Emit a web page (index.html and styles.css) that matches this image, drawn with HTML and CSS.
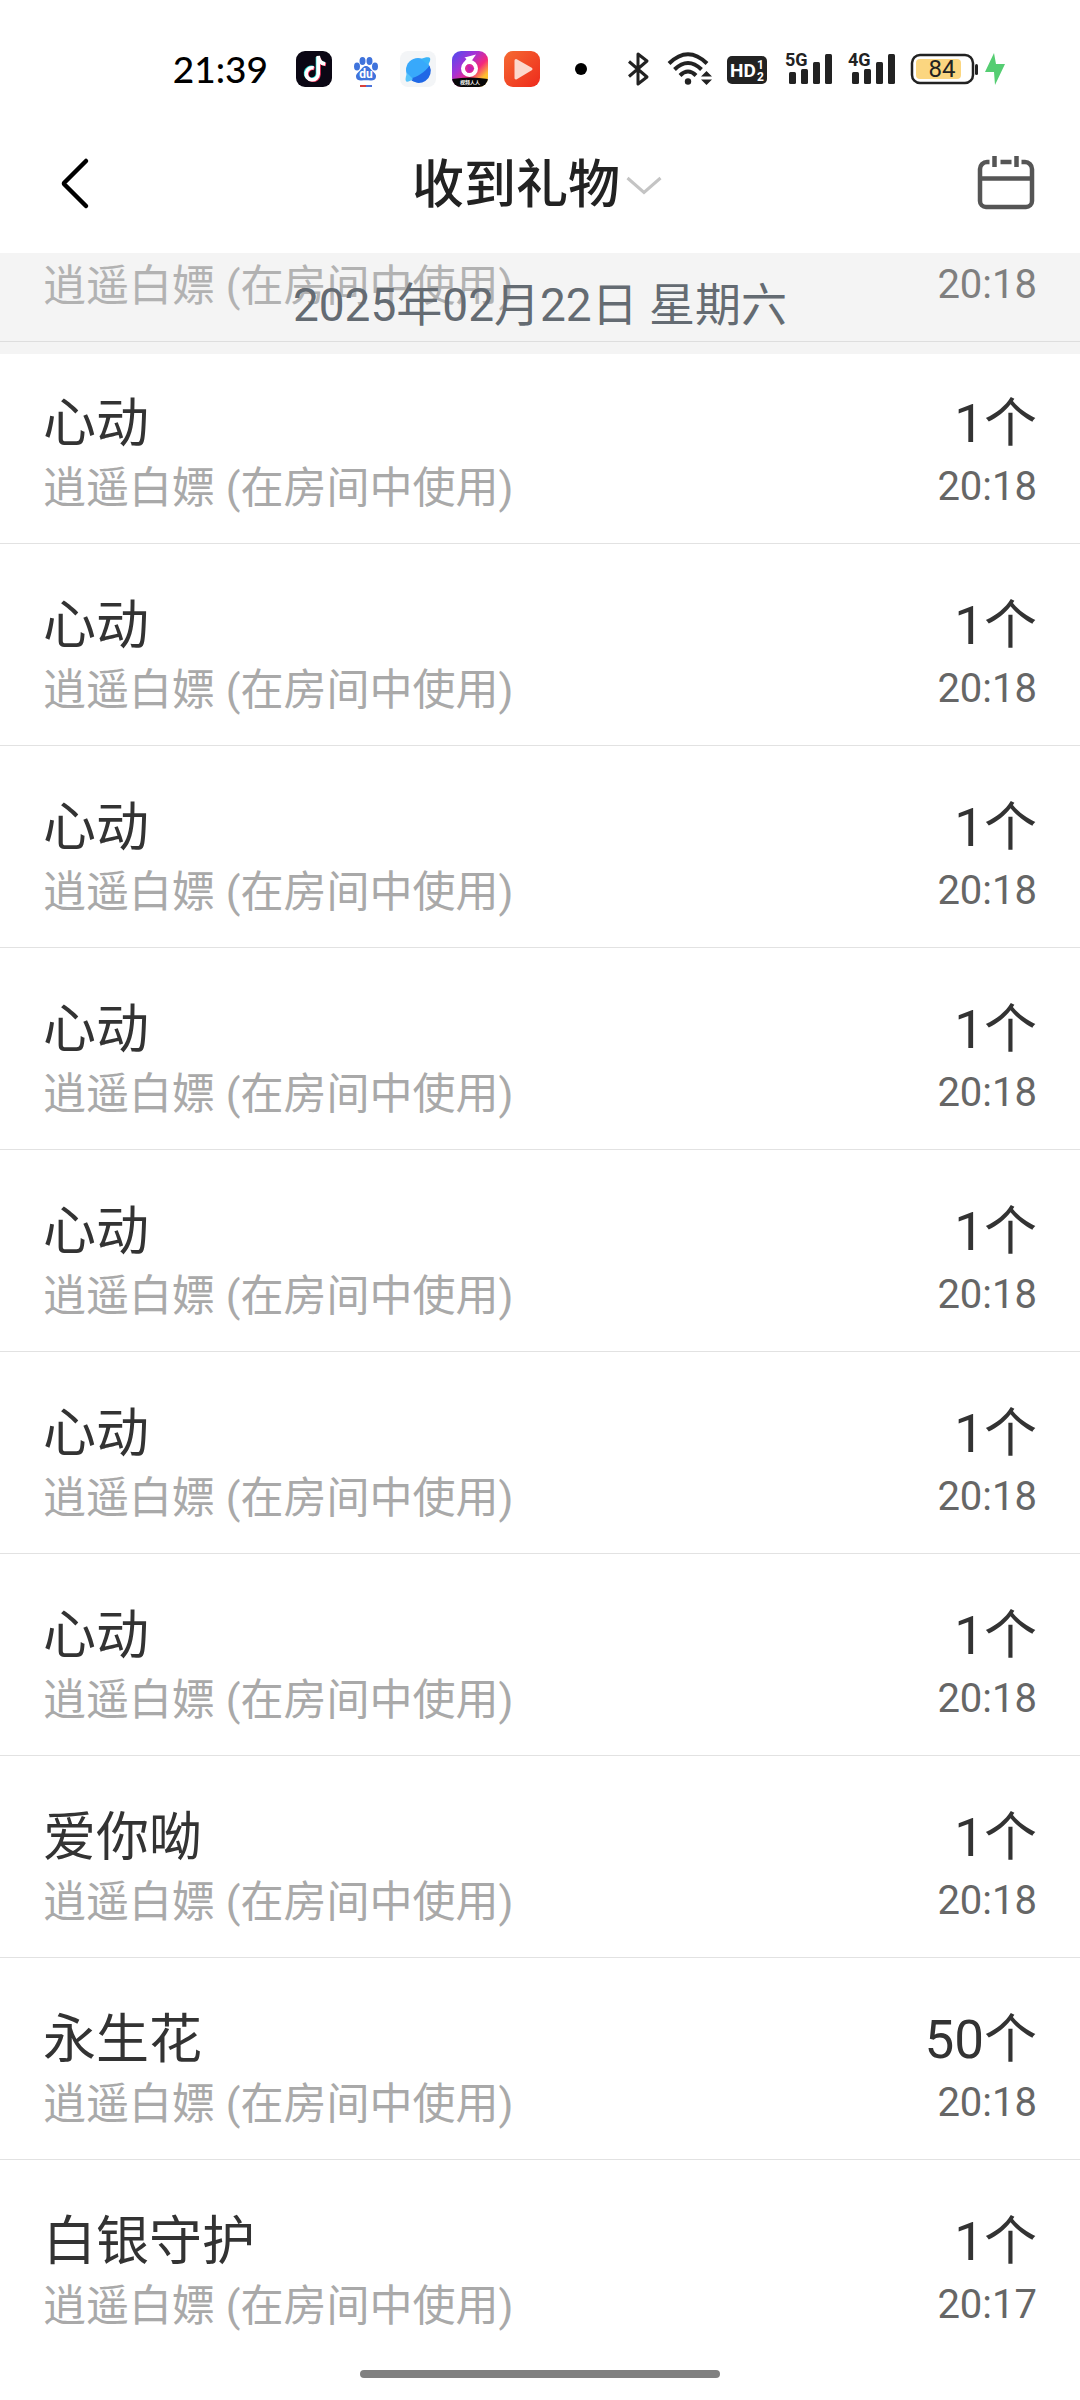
FILE: index.html
```html
<!DOCTYPE html>
<html lang="zh-CN">
<head>
    <meta charset="UTF-8">
    <meta name="viewport" content="width=device-width, initial-scale=1.0">
    <title>收到礼物</title>
    <link rel="stylesheet" href="styles.css">
</head>
<body>
    <div class="status-bar">
        <span class="clock">21:39</span>

        <div class="status-apps">
            <svg width="36" height="36" viewBox="0 0 36 36">
                <rect width="36" height="36" rx="9" fill="#0b0714"/>
                <g fill="none" stroke-width="3.6">
                    <path d="M17 16.500a6 6 0 1 0 4.500 6V6c.5 4 3 6 7 6.500" stroke="#25e5e0"/>
                    <path d="M18.500 17.500a6 6 0 1 0 4.500 6V7c.5 4 3 6 7 6.500" stroke="#f6315b"/>
                    <path d="M17.700 17a6 6 0 1 0 4.500 6V5c.5 5 3 7.500 7 8" stroke="#fff"/>
                </g>
            </svg>
            <svg width="36" height="36" viewBox="0 0 36 36">
                <g fill="#3f73dc">
                    <ellipse cx="9" cy="15.500" rx="3" ry="4"/>
                    <ellipse cx="14.500" cy="10" rx="3" ry="4"/>
                    <ellipse cx="21.500" cy="10" rx="3" ry="4"/>
                    <ellipse cx="27" cy="15.500" rx="3" ry="4"/>
                    <path d="M18 15c3 0 4 2.500 6 4.500 2.500 2.300 4.500 4 4 6.500-.5 3-3 3.600-5.500 3.400-3-.3-6-.3-9 0C11 29.600 8.500 29 8 26c-.4-2.500 1.500-4.200 4-6.500 2-2 3-4.500 6-4.500z"/>
                </g>
                <text class="du-text" x="18" y="27" text-anchor="middle">du</text>
                <path d="M12 35h6" stroke="#d8403c" stroke-width="2"/>
                <path d="M18 35h6" stroke="#4d73d8" stroke-width="2"/>
            </svg>
            <svg width="36" height="36" viewBox="0 0 36 36">
                <rect width="36" height="36" rx="8" fill="#f3f5f7"/>
                <circle cx="18" cy="19" r="12" fill="#38a9fb"/>
                <path d="M29.500 14.500A12 12 0 0 1 9.500 27.500C17 26.500 25 21 29.500 14.500z" fill="#2068e6"/>
                <path d="M21 8c4-2 8-2.500 9-1 .8 1.400-.2 4-2 7z" fill="#39b4f8"/>
                <path d="M7 22c-1.500 4-2 7.500-.6 8.500 1.200.8 3.600-.4 6.600-2.500z" fill="#57c4fb"/>
            </svg>
            <svg width="36" height="36" viewBox="0 0 36 36">
                <defs>
                    <linearGradient id="six" x1="0" y1="0" x2="1" y2="1">
                        <stop offset="0" stop-color="#4a4cf0"/>
                        <stop offset=".35" stop-color="#a432d6"/>
                        <stop offset=".6" stop-color="#f5287c"/>
                        <stop offset=".8" stop-color="#ffc02e"/>
                    </linearGradient>
                    <clipPath id="six-clip"><rect width="36" height="36" rx="9"/></clipPath>
                </defs>
                <g clip-path="url(#six-clip)">
                    <rect width="36" height="36" fill="url(#six)"/>
                    <path d="M12.500 6.500L24 3.500l-5.500 8-8 5c0-3.500 1.500-6 4-8.500z" fill="#fff"/>
                    <circle cx="17.500" cy="17.500" r="6.500" fill="#e02a96" stroke="#fff" stroke-width="4"/>
                    <path d="M15.500 13.500l7 4-7 4.500z" fill="#c321b0"/>
                    <path d="M0 28q18-3 36 0v8H0z" fill="#080808"/>
                </g>
                <text class="tiny-text" x="18" y="33" text-anchor="middle">视频人人</text>
            </svg>
            <svg width="36" height="36" viewBox="0 0 36 36">
                <defs>
                    <linearGradient id="play" x1="0" y1="0" x2="1" y2="1">
                        <stop offset="0" stop-color="#f56a32"/>
                        <stop offset="1" stop-color="#ee2a1c"/>
                    </linearGradient>
                </defs>
                <rect width="36" height="36" rx="9" fill="url(#play)"/>
                <path d="M12 9.500l15 8.500-15 9z" fill="#fcd8cd" stroke="#fcd8cd" stroke-width="3" stroke-linejoin="round"/>
            </svg>
        </div>

        <span class="more-dot"></span>

        <div class="status-system">
            <svg width="24" height="36" viewBox="0 0 24 36" fill="none" stroke="#222" stroke-width="3" stroke-linejoin="round">
                <path d="M2 10.500L20 26l-9 7V3l9 7L2 25.500"/>
            </svg>
            <svg width="48" height="36" viewBox="0 0 48 36">
                <g fill="none" stroke="#222" stroke-width="4">
                    <path d="M4 12.500Q23-6 42 12.500"/>
                    <path d="M9.500 18.500Q23 5.500 36.500 18.500"/>
                    <path d="M15 24.500Q23 16.500 31 24.500"/>
                </g>
                <circle cx="23" cy="30.500" r="3.200" fill="#222"/>
                <path d="M36 25.500l5.500-5.500 5.500 5.500zM36 28.500l5.500 5.500 5.500-5.500z" fill="#222"/>
            </svg>
            <svg width="40" height="36" viewBox="0 0 40 36">
                <rect y="5" width="40" height="28" rx="5" fill="#222"/>
                <text class="hd-text" x="3" y="26">HD</text>
                <text class="hd-sim" x="30" y="18">1</text>
                <text class="hd-sim" x="30" y="30">2</text>
            </svg>
            <svg width="54" height="36" viewBox="-5 0 54 36">
                <text class="net-text" x="-1" y="15">5G</text>
                <g fill="#222">
                    <rect x="3" y="21" width="7" height="12" rx="1.500"/>
                    <rect x="15" y="18" width="7" height="15" rx="1.500"/>
                    <rect x="27" y="11" width="7" height="22" rx="1.500"/>
                    <rect x="39" y="3" width="7" height="30" rx="1.500"/>
                </g>
            </svg>
            <svg width="48" height="36" viewBox="0 0 48 36">
                <text class="net-text" x="-1" y="15">4G</text>
                <g fill="#222">
                    <rect x="3" y="21" width="7" height="12" rx="1.500"/>
                    <rect x="15" y="18" width="7" height="15" rx="1.500"/>
                    <rect x="27" y="11" width="7" height="22" rx="1.500"/>
                    <rect x="39" y="3" width="7" height="30" rx="1.500"/>
                </g>
            </svg>
            <div class="battery">
                <svg width="68" height="36" viewBox="0 0 68 36">
                    <rect x="1" y="4" width="61" height="28" rx="8" fill="#fff" stroke="#222" stroke-width="2.500"/>
                    <rect x="5" y="8" width="45" height="20" rx="4" fill="#fbd680"/>
                    <rect x="64" y="13" width="3" height="11" rx="1.500" fill="#222"/>
                    <text class="battery-text" x="31" y="26" text-anchor="middle">84</text>
                </svg>
                <svg width="20" height="36" viewBox="0 0 20 36">
                    <path d="M9 2L0 21h9l1 13 10-21h-9z" fill="#55cd72"/>
                </svg>
            </div>
        </div>
    </div>

    <header class="header">
        <button class="icon-btn back-btn" aria-label="返回">
            <svg width="60" height="56" viewBox="0 0 60 56" fill="none" stroke="#000" stroke-width="4.500" stroke-linecap="round" stroke-linejoin="round">
                <path d="M42 6L20.500 27.500a1.500 1.500 0 0 0 0 2L42 51"/>
            </svg>
        </button>
        <button class="title-btn">
            <span class="title">收到礼物</span>
            <svg width="36" height="20" viewBox="0 0 36 20" fill="none" stroke="#c4c4c4" stroke-width="3">
                <path d="M1.500 2L18 16.500 34.500 2"/>
            </svg>
        </button>
        <button class="icon-btn calendar-btn" aria-label="选择日期">
            <svg width="60" height="56" viewBox="0 0 60 56" fill="none" stroke="#555" stroke-width="4.500">
                <path d="M13.500 7H11a7 7 0 0 0-7 7v32a6 6 0 0 0 6 6h40a6 6 0 0 0 6-6V14a7 7 0 0 0-7-7h-3.500M24.500 7h11M18.500 1v11M40.500 1v11M4 23.500h52"/>
            </svg>
        </button>
    </header>

    <main class="list-view">
        <div class="date-bar">2025年02月22日 星期六</div>
        <ul class="gift-list">
            <li class="gift">
                <div class="gift-info">
                    <p class="gift-name">心动</p>
                    <p class="gift-from">逍遥白嫖 (在房间中使用)</p>
                </div>
                <div class="gift-meta">
                    <p class="gift-count">1个</p>
                    <p class="gift-time">20:18</p>
                </div>
            </li>
            <li class="gift">
                <div class="gift-info">
                    <p class="gift-name">心动</p>
                    <p class="gift-from">逍遥白嫖 (在房间中使用)</p>
                </div>
                <div class="gift-meta">
                    <p class="gift-count">1个</p>
                    <p class="gift-time">20:18</p>
                </div>
            </li>
            <li class="gift">
                <div class="gift-info">
                    <p class="gift-name">心动</p>
                    <p class="gift-from">逍遥白嫖 (在房间中使用)</p>
                </div>
                <div class="gift-meta">
                    <p class="gift-count">1个</p>
                    <p class="gift-time">20:18</p>
                </div>
            </li>
            <li class="gift">
                <div class="gift-info">
                    <p class="gift-name">心动</p>
                    <p class="gift-from">逍遥白嫖 (在房间中使用)</p>
                </div>
                <div class="gift-meta">
                    <p class="gift-count">1个</p>
                    <p class="gift-time">20:18</p>
                </div>
            </li>
            <li class="gift">
                <div class="gift-info">
                    <p class="gift-name">心动</p>
                    <p class="gift-from">逍遥白嫖 (在房间中使用)</p>
                </div>
                <div class="gift-meta">
                    <p class="gift-count">1个</p>
                    <p class="gift-time">20:18</p>
                </div>
            </li>
            <li class="gift">
                <div class="gift-info">
                    <p class="gift-name">心动</p>
                    <p class="gift-from">逍遥白嫖 (在房间中使用)</p>
                </div>
                <div class="gift-meta">
                    <p class="gift-count">1个</p>
                    <p class="gift-time">20:18</p>
                </div>
            </li>
            <li class="gift">
                <div class="gift-info">
                    <p class="gift-name">心动</p>
                    <p class="gift-from">逍遥白嫖 (在房间中使用)</p>
                </div>
                <div class="gift-meta">
                    <p class="gift-count">1个</p>
                    <p class="gift-time">20:18</p>
                </div>
            </li>
            <li class="gift">
                <div class="gift-info">
                    <p class="gift-name">心动</p>
                    <p class="gift-from">逍遥白嫖 (在房间中使用)</p>
                </div>
                <div class="gift-meta">
                    <p class="gift-count">1个</p>
                    <p class="gift-time">20:18</p>
                </div>
            </li>
            <li class="gift">
                <div class="gift-info">
                    <p class="gift-name">爱你呦</p>
                    <p class="gift-from">逍遥白嫖 (在房间中使用)</p>
                </div>
                <div class="gift-meta">
                    <p class="gift-count">1个</p>
                    <p class="gift-time">20:18</p>
                </div>
            </li>
            <li class="gift">
                <div class="gift-info">
                    <p class="gift-name">永生花</p>
                    <p class="gift-from">逍遥白嫖 (在房间中使用)</p>
                </div>
                <div class="gift-meta">
                    <p class="gift-count">50个</p>
                    <p class="gift-time">20:18</p>
                </div>
            </li>
            <li class="gift">
                <div class="gift-info">
                    <p class="gift-name">白银守护</p>
                    <p class="gift-from">逍遥白嫖 (在房间中使用)</p>
                </div>
                <div class="gift-meta">
                    <p class="gift-count">1个</p>
                    <p class="gift-time">20:17</p>
                </div>
            </li>
        </ul>
    </main>

    <div class="home-bar"></div>
</body>
</html>
```

FILE: styles.css
```css
* {
    margin: 0;
    padding: 0;
    box-sizing: border-box;
}

body {
    font-family: Roboto, 'Noto Sans CJK SC', sans-serif;
    background: #fff;
    color: #333;
}

svg {
    display: block;
    flex-shrink: 0;
    overflow: visible;
}

button {
    border: none;
    background: none;
    font-family: inherit;
    cursor: pointer;
}

/* status bar */
.status-bar {
    display: flex;
    align-items: center;
    justify-content: flex-end;
    padding: 51px 75px 29px;
}

.clock {
    font-family: Lato, sans-serif;
    font-size: 37px;
    line-height: 36px;
    font-weight: 500;
    color: #000;
    margin-right: 28px;
}

.status-apps {
    display: flex;
    gap: 16px;
}

.more-dot {
    width: 12px;
    height: 12px;
    margin: 0 40px 0 35px;
    border-radius: 50%;
    background: #000;
}

.status-system {
    display: flex;
    gap: 14px;
}

.battery {
    display: flex;
    gap: 6px;
}

.du-text {
    font-size: 12px;
    font-weight: 700;
    fill: #fff;
}

.tiny-text {
    font-size: 5px;
    font-weight: 700;
    fill: #fff;
}

.hd-text {
    font-size: 19px;
    font-weight: 700;
    fill: #fff;
}

.hd-sim {
    font-size: 12px;
    font-weight: 700;
    fill: #fff;
}

.net-text {
    font-size: 18px;
    font-weight: 700;
    fill: #222;
}

.battery-text {
    font-size: 24px;
    fill: #222;
}

/* page header */
.header {
    display: grid;
    grid-template-columns: 1fr auto 1fr;
    align-items: center;
    height: 137px;
    padding: 0 44px 4px;
}

.calendar-btn {
    justify-self: end;
}

.back-btn {
    justify-self: start;
}

.title-btn {
    display: flex;
    align-items: center;
    gap: 6px;
    padding: 6px 6px 0 0;
}

.title {
    font-size: 52px;
    line-height: 64px;
    font-weight: 500;
    color: #222;
}

/* gift records */
.list-view {
    position: relative;
    overflow: hidden;
}

.date-bar {
    position: absolute;
    top: 0;
    left: 0;
    right: 0;
    z-index: 1;
    height: 101px;
    padding-top: 2px;
    line-height: 101px;
    font-size: 46px;
    text-align: center;
    color: #646b72;
    background: rgba(209, 209, 209, 0.24);
}

/* the list is scrolled half a row under the date bar */
.gift-list {
    list-style: none;
    margin-top: -113px;
}

.gift {
    display: flex;
    justify-content: space-between;
    height: 202px;
    padding: 50px 43px 0;
    border-bottom: 1px solid #e2e2e2;
}

.gift:last-child {
    border-bottom: none;
}

.gift-meta {
    text-align: right;
}

.gift-name,
.gift-count {
    font-size: 53px;
    line-height: 64px;
}

.gift-from {
    font-size: 43px;
    line-height: 64px;
    color: #a9a9a9;
}

.gift-time {
    font-size: 40px;
    line-height: 62px;
    color: #666;
}

.home-bar {
    width: 33.33%;
    height: 8px;
    margin: 8px auto 0;
    border-radius: 4px;
    background: #808080;
}
```
